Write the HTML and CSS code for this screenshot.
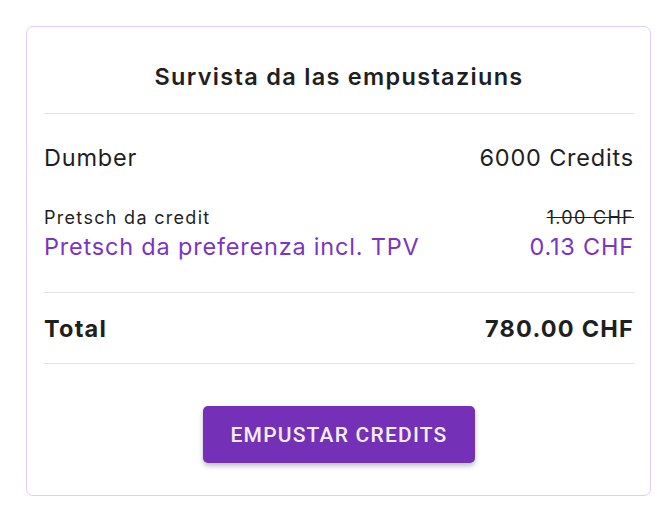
FILE: index.html
```html
<!DOCTYPE html>
<html>
<head>
<meta charset="utf-8">
<link rel="stylesheet" href="styles.css">
</head>
<body>
<div class="card">
  <h2 class="title">Survista da las empustaziuns</h2>
  <div class="divider"></div>
  <div class="row big count">
    <span>Dumber</span>
    <span>6000 Credits</span>
  </div>
  <div class="row small unit">
    <span>Pretsch da credit</span>
    <span class="strike">1.00 CHF</span>
  </div>
  <div class="row big purple">
    <span>Pretsch da preferenza incl. TPV</span>
    <span>0.13 CHF</span>
  </div>
  <div class="divider gap-top"></div>
  <div class="row big total">
    <span>Total</span>
    <span>780.00 CHF</span>
  </div>
  <div class="divider"></div>
  <div class="actions">
    <button class="btn">EMPUSTAR CREDITS</button>
  </div>
</div>
</body>
</html>
```
FILE: styles.css
```css
html, body {
  margin: 0;
  padding: 0;
  background: #fff;
}
body {
  padding: 26px 0 0 26px;
  font-family: Inter, Roboto, "Noto Sans", sans-serif;
  color: #1f1f1f;
}
.card {
  box-sizing: border-box;
  width: 625px;
  border: 1px solid #e3cdf3;
  border-radius: 7px;
  padding: 0 16px 32px 17px;
}
.title {
  margin: 0;
  padding-top: 35px;
  margin-bottom: 21px;
  font-family: Inter, sans-serif;
  font-weight: 600;
  font-size: 23.5px;
  letter-spacing: 1.3px;
  text-align: center;
  color: #1f1f1f;
  line-height: 30px;
}
.divider {
  height: 1px;
  background: #e2e0e4;
}
.row {
  display: flex;
  justify-content: space-between;
  align-items: baseline;
}
.big {
  font-size: 23.5px;
  line-height: 30px;
  letter-spacing: 0.8px;
}
.count {
  margin-top: 29px;
}
.small {
  font-size: 18px;
  line-height: 24px;
  letter-spacing: 1.3px;
}
.unit {
  margin-top: 33px;
}
.strike {
  text-decoration: line-through;
}
.purple {
  margin-top: 2px;
  color: #7b35c1;
}
.gap-top {
  margin-top: 30px;
}
.total {
  font-weight: 700;
  margin-top: 21px;
  margin-bottom: 19px;
  letter-spacing: 1.2px;
}
.actions {
  display: flex;
  justify-content: center;
  padding-top: 42px;
}
.btn {
  width: 272px;
  height: 57px;
  border: none;
  border-radius: 5px;
  background: #7430b6;
  color: #f4eefa;
  font-family: Roboto, sans-serif;
  font-weight: 500;
  font-size: 21px;
  letter-spacing: 1.2px;
  box-shadow: 0 3px 5px rgba(0,0,0,0.25);
}
```
